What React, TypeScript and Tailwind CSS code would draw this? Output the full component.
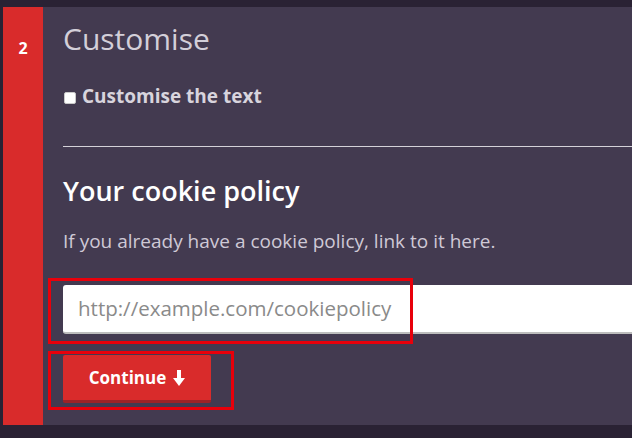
import React from "react";

export default function App() {
  return (
    <div
      className="w-[632px] h-[438px] overflow-hidden bg-[#2a2234] pt-[7px] pl-[3px]"
      style={{ fontFamily: "'Open Sans', Lato, sans-serif" }}
    >
      <div className="flex h-[418px]">
        <div className="w-[40px] shrink-0 bg-[#d92b2b] flex justify-center pt-[33px]">
          <span className="text-white font-bold text-[16px] leading-none">2</span>
        </div>
        <div className="relative flex-1 bg-[#433a50] pl-[20px] pt-[14px]">
          <h1 className="text-[#d3cfd9] text-[30px] leading-[36px] font-normal">Customise</h1>
          <label className="mt-[27px] flex items-center gap-[6px] text-[#d8d4dd] font-bold text-[19px] leading-[24px]">
            <span className="w-[12px] h-[12px] mt-[4px] ml-[1px] bg-white rounded-[2px] border border-[#c9c9c9] inline-block" />
            Customise the text
          </label>
          <div className="mt-[38px] h-[1px] bg-[#d4d1d8]" />
          <h2 className="mt-[28px] text-white text-[27px] leading-[32px] font-semibold">Your cookie policy</h2>
          <p className="mt-[22px] text-[#cfc9d6] text-[19px] leading-[24px]">
            If you already have a cookie policy, link to it here.
          </p>
          <div className="mt-[32px] h-[49px] bg-white rounded-l-[3px] border-b-2 border-[#bdbdbd] flex items-center pl-[15px]">
            <span className="text-[#8a8a8a] text-[20.5px]">http://example.com/cookiepolicy</span>
          </div>
          <button className="mt-[21px] w-[148px] h-[48px] bg-[#d92b2b] rounded-[2px] border-b-[3px] border-[#9e2227] flex items-center justify-center gap-[7px] text-white font-bold text-[17px]">
            Continue
            <svg width="12" height="16" viewBox="0 0 12 16" fill="white">
              <rect x="4" y="0" width="4" height="10" />
              <polygon points="0,8 12,8 6,16" />
            </svg>
          </button>
          <div className="absolute left-[5px] top-[271px] w-[365px] h-[66px] border-[3px] border-[#e8000b] pointer-events-none" />
          <div className="absolute left-[5px] top-[344px] w-[186px] h-[59px] border-[3px] border-[#e8000b] pointer-events-none" />
        </div>
      </div>
    </div>
  );
}
